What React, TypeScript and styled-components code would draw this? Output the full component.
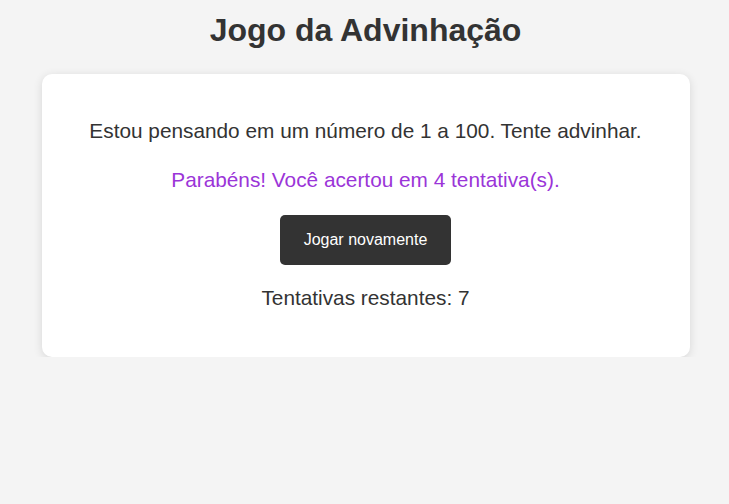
import React from 'react';
import styled, { createGlobalStyle } from 'styled-components';

const GlobalStyle = createGlobalStyle`
  html, body {
    margin: 0;
    padding: 0;
    background: #f4f4f4;
    font-family: 'Liberation Sans', Arial, sans-serif;
    color: #333;
  }
`;

const Page = styled.main`
  display: flex;
  flex-direction: column;
  align-items: center;
  padding: 12px 0 0 2px;
`;

const Title = styled.h1`
  margin: 0;
  font-size: 32px;
  font-weight: bold;
  color: #333;
`;

const Card = styled.section`
  box-sizing: border-box;
  width: 648px;
  margin-top: 25px;
  padding: 45px 40px 47px;
  background: #fff;
  border-radius: 10px;
  box-shadow: 0 2px 10px rgba(0, 0, 0, 0.12);
  display: flex;
  flex-direction: column;
  align-items: center;
  text-align: center;
`;

const Text = styled.p<{ $accent?: boolean; $gap?: number }>`
  margin: ${({ $gap }) => $gap ?? 0}px 0 0;
  font-size: 1.3em;
  color: ${({ $accent }) => ($accent ? '#9b35d8' : '#333')};
`;

const Button = styled.button`
  margin-top: 23px;
  padding: 16px 24px;
  border: none;
  border-radius: 5px;
  background: #333;
  color: #fff;
  font-family: inherit;
  font-size: 16px;
  cursor: pointer;
`;

export default function App() {
  return (
    <>
      <GlobalStyle />
      <Page>
        <Title>Jogo da Advinhação</Title>
        <Card>
          <Text>Estou pensando em um número de 1 a 100. Tente advinhar.</Text>
          <Text $accent $gap={25}>
            Parabéns! Você acertou em 4 tentativa(s).
          </Text>
          <Button>Jogar novamente</Button>
          <Text $gap={21}>Tentativas restantes: 7</Text>
        </Card>
      </Page>
    </>
  );
}
